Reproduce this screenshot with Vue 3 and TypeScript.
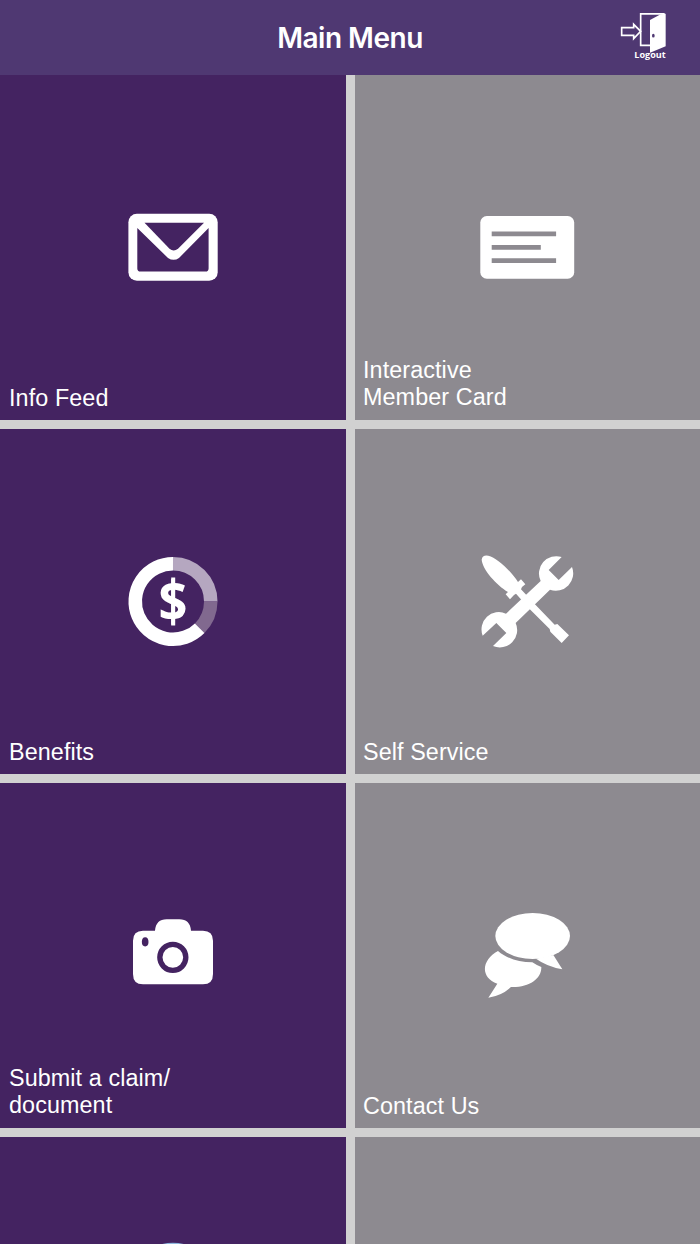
<script setup lang="ts">
interface Tile {
  id: string
  lines: string[]
  viewBox: string
}

const tiles: Tile[] = [
  { id: 'feed', lines: ['Info Feed'], viewBox: '0 75 346 345' },
  { id: 'card', lines: ['Interactive', 'Member Card'], viewBox: '355 75 345 345' },
  { id: 'benefits', lines: ['Benefits'], viewBox: '0 429 346 345' },
  { id: 'service', lines: ['Self Service'], viewBox: '355 429 345 345' },
  { id: 'claim', lines: ['Submit a claim/', 'document'], viewBox: '0 783 346 345' },
  { id: 'contact', lines: ['Contact Us'], viewBox: '355 783 345 345' },
  { id: 'more', lines: [], viewBox: '0 1137 346 345' },
  { id: 'extra', lines: [], viewBox: '355 1137 345 345' },
]
</script>

<template>
  <main class="screen">
    <header class="bar">
      <h1 class="title">Main Menu</h1>
      <button class="logout" aria-label="Logout">
        <svg viewBox="0 0 300 222" width="100" height="74">
          <g fill="none" stroke="#fff" stroke-width="5">
            <path d="M65 83H101V73L122 94L101 116V106H65Z" />
            <path d="M122 94V41.500H194M122 94V136H151" />
          </g>
          <path d="M150 60L182 43L197 41V139L150 158Z" fill="#fff" />
          <ellipse cx="160" cy="107" rx="4" ry="5.500" fill="#4f3872" />
          <text class="logout-text" x="103" y="174" textLength="94" lengthAdjust="spacingAndGlyphs">Logout</text>
        </svg>
      </button>
    </header>

    <section class="grid">
      <article v-for="tile in tiles" :key="tile.id" class="tile">
        <svg class="icon" :viewBox="tile.viewBox" fill="#fff">
          <g v-if="tile.id === 'feed'">
            <rect x="128.400" y="213.700" width="89.300" height="67" rx="8.500" />
            <g class="cut">
              <path d="M144.500 222.700H204L178 248.800Q173.600 252 169.500 248.800Z" />
              <path d="M137.300 228L168 258Q173.600 261.700 179 258L208.600 228V268.500Q208.600 271.600 205.500 271.600H140.500Q137.300 271.600 137.300 268.500Z" />
            </g>
          </g>

          <g v-else-if="tile.id === 'card'">
            <rect x="480.300" y="216" width="93.900" height="62.700" rx="6.500" />
            <path class="rule" d="M491.700 231.500h64.400v4.700h-64.400zM491.700 245h49.100v4.700h-49.100zM491.700 258.300h64.400v4.700h-64.400z" />
          </g>

          <g v-else-if="tile.id === 'benefits'">
            <g fill="none" stroke-width="13.500">
              <path d="M173 563.750A37.750 37.750 0 0 1 210.750 601.500" stroke="#b5a7c0" />
              <path d="M210.750 601.500A37.750 37.750 0 0 1 199.690 628.190" stroke="#81698f" />
              <path d="M199.690 628.190A37.750 37.750 0 1 1 173 563.750" stroke="#fff" />
            </g>
            <text class="dollar" transform="translate(173 620.600) scale(.92 1)" text-anchor="middle">$</text>
            <rect x="171.200" y="577.500" width="4" height="48" />
          </g>

          <g v-else-if="tile.id === 'service'" transform="translate(470 545) scale(.33333)">
            <path d="M35 44Q37 29 55 32C82 38 126 82 144 111L153 103L166 118L156 126L153 133L197 180L254 239L262 237L297 271L275 294L241 260L239 252L181 194L138 146L132 150L120 163L107 148L114 141C80 120 38 75 35 44Z" />
            <path d="M275 36A52 52 0 0 0 212 108L108 206A52 52 0 0 0 38 272L79 234L109 264L69 303A52 52 0 0 0 137 234L240 134A52 52 0 0 0 306 66L266 105L236 75Z" />
          </g>

          <g v-else-if="tile.id === 'claim'" transform="translate(120 905) scale(.33333)">
            <path d="M39 107Q39 77 69 77H105Q108 43 140 43H178Q210 43 213 77H249Q279 77 279 107V207Q279 238 249 238H69Q39 238 39 207Z" />
            <circle class="lens" cx="158.500" cy="157" r="39" />
            <ellipse class="cut" cx="75.500" cy="110.500" rx="10" ry="14" />
          </g>

          <g v-else-if="tile.id === 'contact'" transform="translate(475 900) scale(.33333)">
            <ellipse cx="173" cy="108" rx="112" ry="69" />
            <path d="M235 165L262 208Q215 199 183 176Z" />
            <path d="M69 153C95 175 130 187 172 187Q185 196 199 201C200 236 162 263 108 261Q80 287 40 293L67 251C14 231 20 180 69 153Z" />
          </g>

          <circle v-else-if="tile.id === 'more'" cx="173" cy="1287.200" r="44.500" fill="#8fb8df" />
        </svg>
        <p v-if="tile.lines.length" class="label" :class="{ single: tile.lines.length === 1 }">
          <span v-for="line in tile.lines" :key="line">{{ line }}</span>
        </p>
      </article>
    </section>
  </main>
</template>

<style>
body {
  margin: 0;
  overflow: hidden;
}
</style>

<style scoped>
.screen {
  width: 700px;
  height: 1244px;
  overflow: hidden;
  background: #d1d1d1;
}

.bar {
  display: grid;
  align-items: center;
  height: 75px;
  background: #4f3872;
}

.title {
  grid-area: 1 / 1;
  margin: 0;
  color: #fff;
  font: 600 28px/34px Inter, "Liberation Sans", sans-serif;
  letter-spacing: -0.5px;
  text-align: center;
}

.logout {
  grid-area: 1 / 1;
  align-self: start;
  justify-self: end;
  padding: 0;
  border: 0;
  background: none;
}

.logout svg {
  display: block;
}

.logout-text {
  fill: #fff;
  font: 700 28px "Open Sans", sans-serif;
}

.grid {
  display: grid;
  grid-template-columns: 346px 345px;
  grid-auto-rows: 345px;
  gap: 9px;
}

.tile {
  display: grid;
  grid-template: 100% / 100%;
  background: #442361;
}

.tile:nth-child(even) {
  background: #8d8a90;
}

.icon {
  grid-area: 1 / 1;
  width: 100%;
  height: 100%;
}

.cut {
  fill: #442361;
}

.rule {
  fill: #8d8a90;
}

.lens {
  fill: none;
  stroke: #442361;
  stroke-width: 16px;
}

.dollar {
  font: 700 55px "Open Sans", sans-serif;
}

.label {
  grid-area: 1 / 1;
  align-self: end;
  margin: 0 0 9px 9px;
  color: #fff;
  font: 23.33px/27px "Liberation Sans", Arial, sans-serif;
  letter-spacing: 0.1px;
}

.label.single {
  margin-bottom: 8px;
}

.tile:nth-child(even) .label {
  margin-left: 8px;
}

.label span {
  display: block;
}
</style>
